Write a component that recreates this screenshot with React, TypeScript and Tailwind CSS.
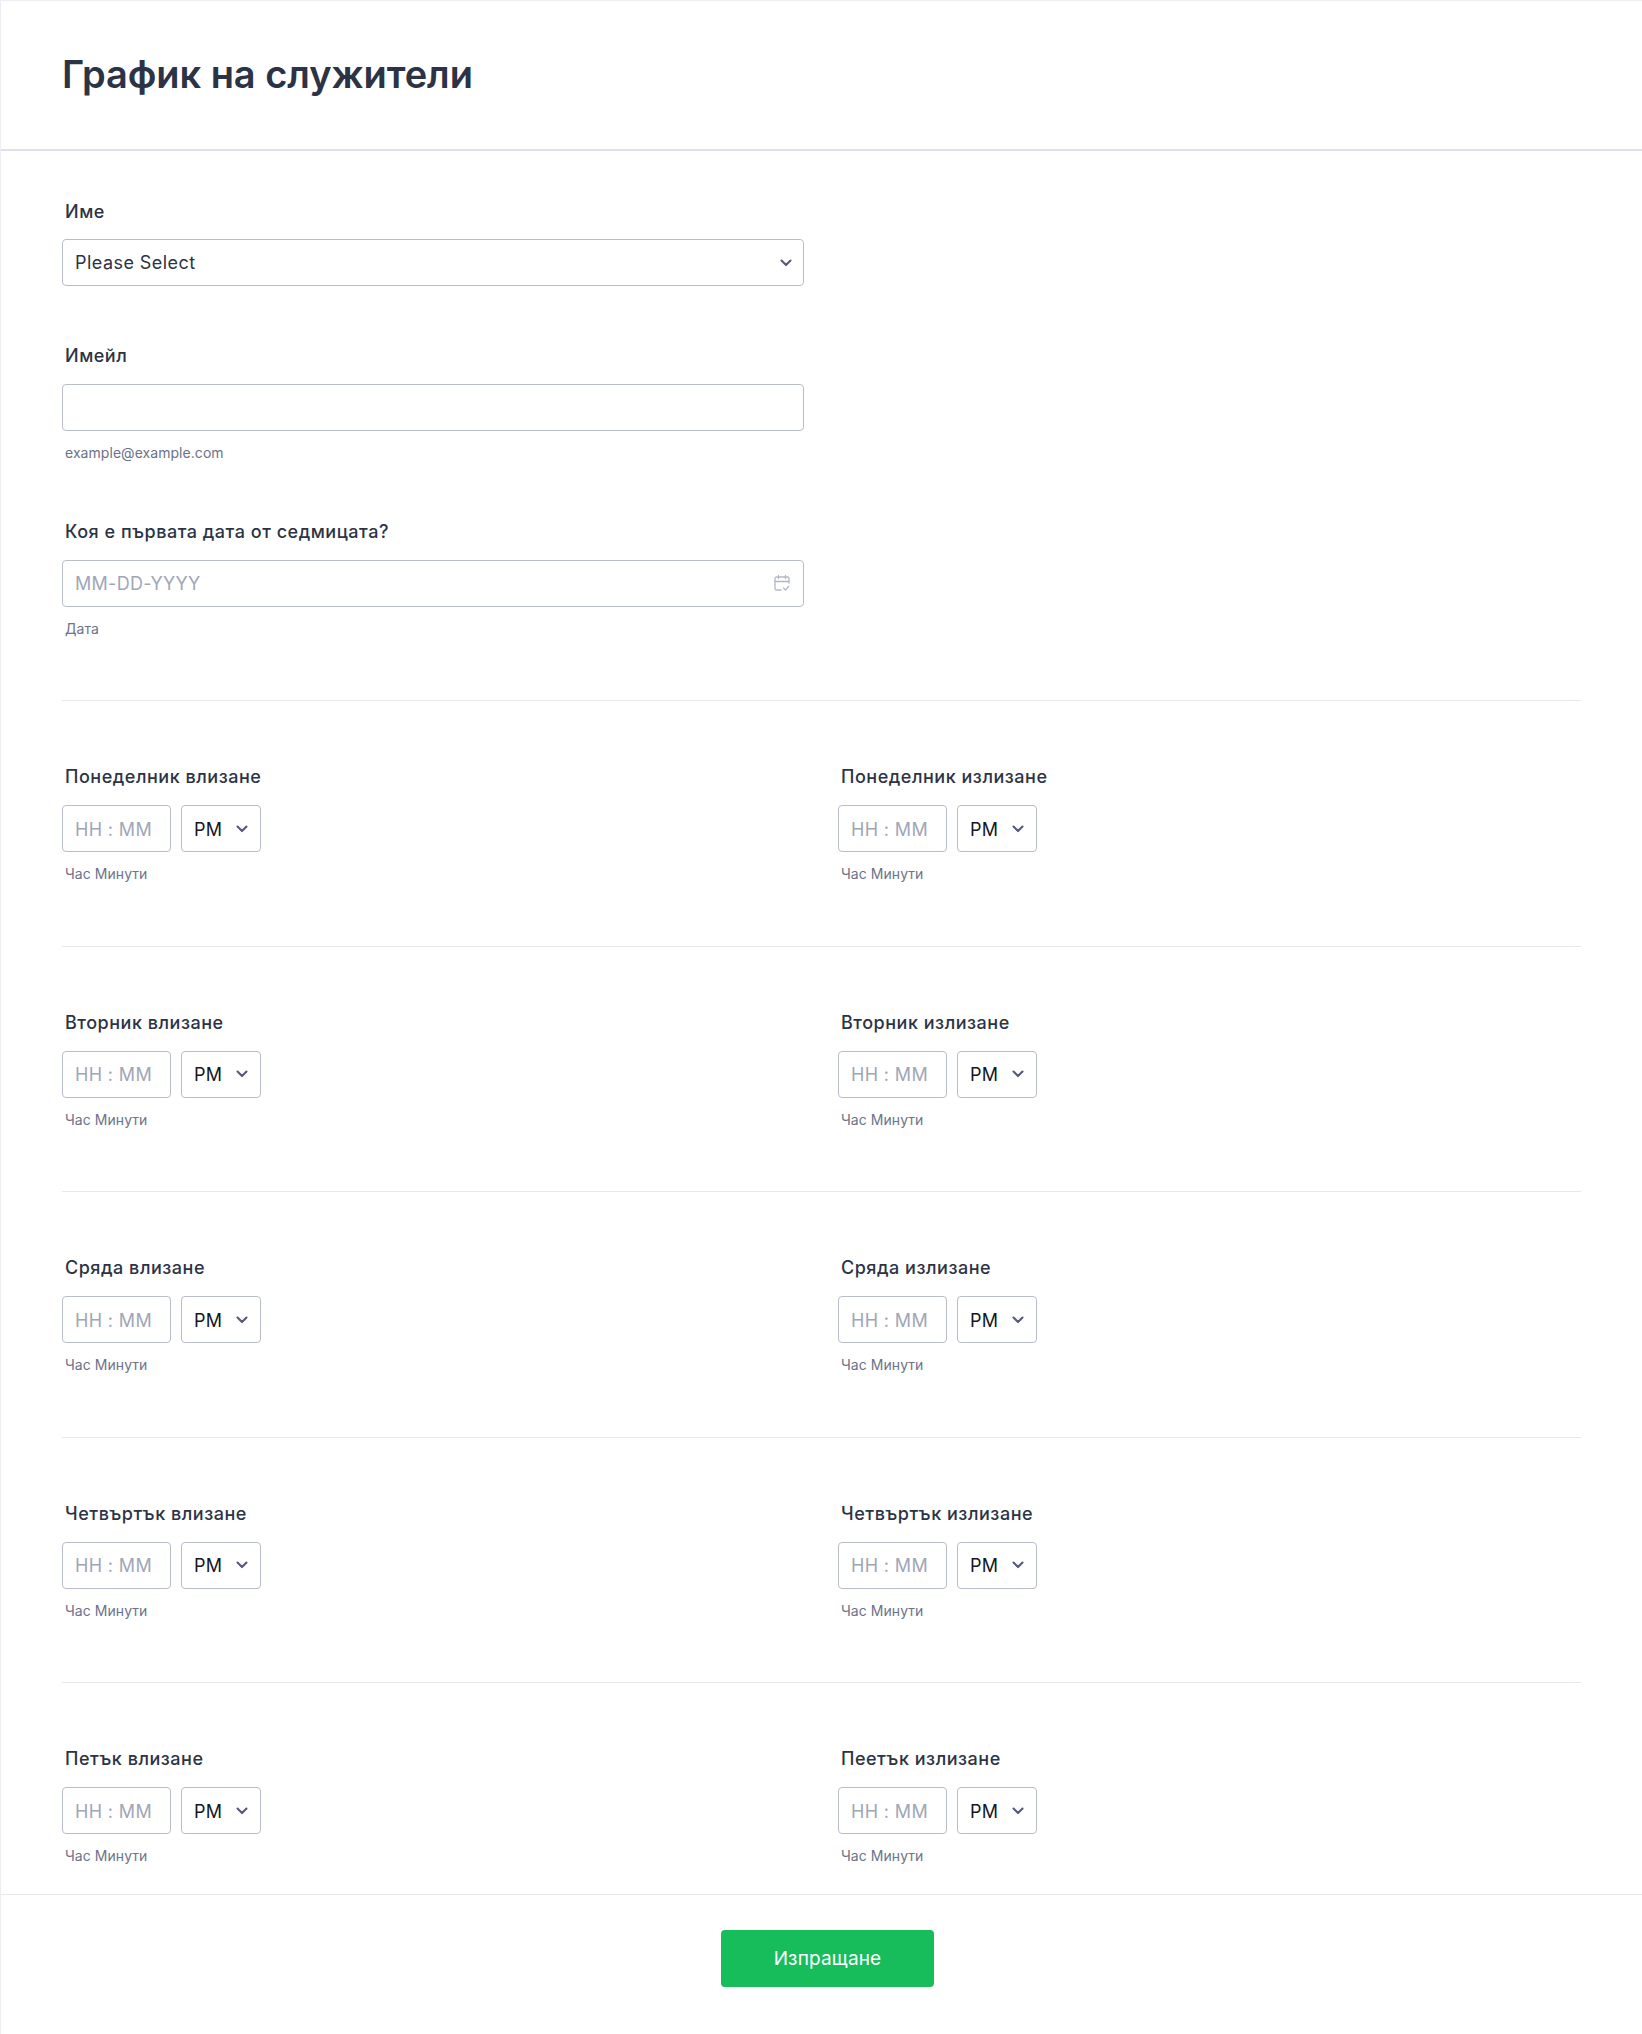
import React from "react";

const labelCls = "block h-[24px] text-[18px] leading-[24px] font-[450] tracking-[0.52px] text-[#2c3345] pl-[3px]";
const subCls = "block h-[18px] text-[14px] leading-[18px] tracking-[0.05px] text-[#6c7289] pl-[3px]";

function Chevron({ className }: { className: string }) {
  return (
    <svg viewBox="0 0 12 8" fill="none" className={className}>
      <path d="M1.5 1.6 6 6.1l4.5-4.5" stroke="#57597a" strokeWidth="2.1" strokeLinecap="round" strokeLinejoin="round" />
    </svg>
  );
}

function TimeField({ label }: { label: string }) {
  return (
    <div className="w-[776px] shrink-0">
      <label className={labelCls}>{label}</label>
      <div className="mt-[16px] flex gap-[10px]">
        <div className="w-[109px] h-[47px] rounded-[4px] border border-[#b8bdc9] flex items-center pl-[12px] pt-[1px] text-[18px] tracking-[0.35px] text-[#a0a6b8]">HH : MM</div>
        <div className="w-[80px] h-[47px] rounded-[4px] border border-[#b8bdc9] flex items-center justify-between pl-[12px] pr-[12px] pt-[1px] text-[18px] tracking-[0.35px] text-[#14171f]">
          <span>PM</span>
          <Chevron className="w-[12px] h-[8px] -mt-[1px]" />
        </div>
      </div>
      <div className={subCls + " mt-[13px]"}>Час Минути</div>
    </div>
  );
}

const rows: [string, string][] = [
  ["Понеделник влизане", "Понеделник излизане"],
  ["Вторник влизане", "Вторник излизане"],
  ["Сряда влизане", "Сряда излизане"],
  ["Четвъртък влизане", "Четвъртък излизане"],
  ["Петък влизане", "Пеетък излизане"],
];

export default function App() {
  return (
    <div className="h-[2034px] flex flex-col bg-white border-l border-t border-[#eceef3] font-['Inter',sans-serif] overflow-hidden">
      <header className="h-[150px] shrink-0 border-b-2 border-[#dfe1e8] pl-[61px] pt-[49px]">
        <h1 className="text-[38px] leading-[48px] font-semibold tracking-[-0.05px] text-[#2c3345]">График на служители</h1>
      </header>
      <main className="flex-1 pl-[61px] pr-[61px] pt-[49px]">
        <div className="w-[742px]">
          <label className={labelCls}>Име</label>
          <div className="mt-[15px] h-[47px] rounded-[4px] border border-[#b8bdc9] flex items-center justify-between pl-[12px] pr-[11px] text-[18px] tracking-[0.45px] text-[#2c3345]">
            <span>Please Select</span>
            <Chevron className="w-[12px] h-[8px]" />
          </div>
          <label className={labelCls + " mt-[58px]"}>Имейл</label>
          <div className="mt-[16px] h-[47px] rounded-[4px] border border-[#b8bdc9]" />
          <div className={subCls + " mt-[13px]"}>example@example.com</div>
          <label className={labelCls + " mt-[58px]"}>Коя е първата дата от седмицата?</label>
          <div className="mt-[16px] h-[47px] rounded-[4px] border border-[#b8bdc9] flex items-center justify-between pl-[12px] pr-[12px] text-[18px] tracking-[0.3px] text-[#a0a6b8]">
            <span>MM-DD-YYYY</span>
            <svg viewBox="0 0 18 18" fill="none" stroke="#b4b8c6" strokeWidth="1.3" strokeLinecap="round" strokeLinejoin="round" className="w-[18px] h-[18px] -mt-[2px]">
              <path d="M8 16H3.500A1.500 1.500 0 0 1 2 14.500V4.500A1.500 1.500 0 0 1 3.500 3h11A1.500 1.500 0 0 1 16 4.500V9" />
              <path d="M2 7.500h14M5.500 1.500v3M12.500 1.500v3M10.500 14l2 2 3-3.500" />
            </svg>
          </div>
          <div className={subCls + " mt-[13px]"}>Дата</div>
        </div>
        <div className="mt-[62px]">
          {rows.map(([a, b], i) => (
            <div key={a} className={"border-t border-[#e6e8ee] pt-[64px] " + (i < 4 ? "h-[245.6px]" : "")}>
              <div className="flex">
                <TimeField label={a} />
                <TimeField label={b} />
              </div>
            </div>
          ))}
        </div>
      </main>
      <footer className="h-[140px] shrink-0 border-t border-[#e6e8ee] flex justify-center pl-[12px] pt-[35px]">
        <button className="w-[213px] h-[57px] pt-[2px] rounded-[4px] bg-[#18bd5b] text-white text-[19px] tracking-[0.15px] font-normal">Изпращане</button>
      </footer>
    </div>
  );
}
